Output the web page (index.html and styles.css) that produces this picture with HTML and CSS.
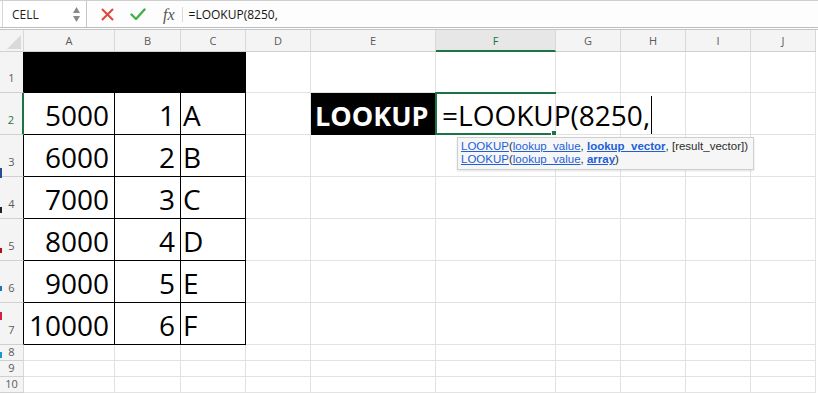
FILE: index.html
```html
<!DOCTYPE html>
<html lang="en">

<head>
  <meta charset="UTF-8">
  <meta name="viewport" content="width=device-width, initial-scale=1.0">
  <title>LOOKUP</title>
  <link rel="stylesheet" href="styles.css">
</head>

<body>
  <div class="toolbar">
    <div class="namebox">
      <span class="name">CELL</span>
      <svg class="spin" width="9" height="18" viewBox="0 0 9 18">
        <path d="M1 8 L4.5 2 L8 8 Z" fill="#8a8a8a" />
        <path d="M1 11 L4.5 17 L8 11 Z" fill="#8a8a8a" />
      </svg>
    </div>
    <div class="actions">
      <svg class="icon-cancel" width="13" height="13" viewBox="0 0 13 13">
        <path d="M1.5 1.5 L11.5 11.5 M11.5 1.5 L1.5 11.5" stroke="#e5433e" stroke-width="2" stroke-linecap="round" />
      </svg>
      <svg class="icon-ok" width="16" height="13" viewBox="0 0 16 13">
        <path d="M1.5 6.5 L6 11 L14.5 1.5" fill="none" stroke="#3fb24a" stroke-width="2.4" stroke-linecap="round" stroke-linejoin="round" />
      </svg>
      <span class="fx">fx</span>
    </div>
    <div class="formula">=LOOKUP(8250,</div>
  </div>

  <div class="sheet">
    <div class="corner"></div>
    <div class="ch">A</div>
    <div class="ch">B</div>
    <div class="ch">C</div>
    <div class="ch">D</div>
    <div class="ch">E</div>
    <div class="ch ch-sel">F</div>
    <div class="ch">G</div>
    <div class="ch">H</div>
    <div class="ch">I</div>
    <div class="ch">J</div>

    <div class="rh rh-edge">1</div>
    <div class="c t blk"></div>
    <div class="c t blk"></div>
    <div class="c t blk"></div>
    <div class="c"></div>
    <div class="c"></div>
    <div class="c"></div>
    <div class="c"></div>
    <div class="c"></div>
    <div class="c"></div>
    <div class="c"></div>

    <div class="rh rh-sel">2</div>
    <div class="c t num">5000</div>
    <div class="c t num">1</div>
    <div class="c t txt">A</div>
    <div class="c"></div>
    <div class="c label">LOOKUP</div>
    <div class="c active"><span class="edit">=LOOKUP(8250,</span></div>
    <div class="c"></div>
    <div class="c"></div>
    <div class="c"></div>
    <div class="c"></div>

    <div class="rh rh-edge">3</div>
    <div class="c t num">6000</div>
    <div class="c t num">2</div>
    <div class="c t txt">B</div>
    <div class="c"></div>
    <div class="c"></div>
    <div class="c"></div>
    <div class="c"></div>
    <div class="c"></div>
    <div class="c"></div>
    <div class="c"></div>

    <div class="rh rh-edge">4</div>
    <div class="c t num">7000</div>
    <div class="c t num">3</div>
    <div class="c t txt">C</div>
    <div class="c"></div>
    <div class="c"></div>
    <div class="c"></div>
    <div class="c"></div>
    <div class="c"></div>
    <div class="c"></div>
    <div class="c"></div>

    <div class="rh rh-edge">5</div>
    <div class="c t num">8000</div>
    <div class="c t num">4</div>
    <div class="c t txt">D</div>
    <div class="c"></div>
    <div class="c"></div>
    <div class="c"></div>
    <div class="c"></div>
    <div class="c"></div>
    <div class="c"></div>
    <div class="c"></div>

    <div class="rh rh-edge">6</div>
    <div class="c t num">9000</div>
    <div class="c t num">5</div>
    <div class="c t txt">E</div>
    <div class="c"></div>
    <div class="c"></div>
    <div class="c"></div>
    <div class="c"></div>
    <div class="c"></div>
    <div class="c"></div>
    <div class="c"></div>

    <div class="rh rh-edge">7</div>
    <div class="c t num">10000</div>
    <div class="c t num">6</div>
    <div class="c t txt">F</div>
    <div class="c"></div>
    <div class="c"></div>
    <div class="c"></div>
    <div class="c"></div>
    <div class="c"></div>
    <div class="c"></div>
    <div class="c"></div>

    <div class="rh rh-small">8</div>
    <div class="c"></div>
    <div class="c"></div>
    <div class="c"></div>
    <div class="c"></div>
    <div class="c"></div>
    <div class="c"></div>
    <div class="c"></div>
    <div class="c"></div>
    <div class="c"></div>
    <div class="c"></div>

    <div class="rh rh-small">9</div>
    <div class="c"></div>
    <div class="c"></div>
    <div class="c"></div>
    <div class="c"></div>
    <div class="c"></div>
    <div class="c"></div>
    <div class="c"></div>
    <div class="c"></div>
    <div class="c"></div>
    <div class="c"></div>

    <div class="rh rh-small">10</div>
    <div class="c"></div>
    <div class="c"></div>
    <div class="c"></div>
    <div class="c"></div>
    <div class="c"></div>
    <div class="c"></div>
    <div class="c"></div>
    <div class="c"></div>
    <div class="c"></div>
    <div class="c"></div>

    <div class="tip">
      <div><a>LOOKUP</a>(<a>lookup_value</a>, <a class="cur">lookup_vector</a>, [result_vector])</div>
      <div><a>LOOKUP</a>(<a>lookup_value</a>, <a class="cur">array</a>)</div>
    </div>
    <div class="edge"></div>
  </div>
</body>

</html>
```

FILE: styles.css
```css
body {
  margin: 0;
  background-color: #fff;
  font-family: "Open Sans", sans-serif;
  overflow: hidden;
}

.toolbar {
  display: flex;
  align-items: center;
  height: 28px;
  box-sizing: border-box;
  border-top: 1px solid #cfcfcf;
  border-bottom: 1px solid #bdbdbd;
  background-color: #fdfdfd;
}

.namebox {
  display: flex;
  align-items: center;
  justify-content: space-between;
  width: 85px;
  height: 100%;
  box-sizing: border-box;
  margin-left: 2px;
  padding: 0 5px 0 9px;
  border-left: 1px solid #d6d6d6;
  border-right: 1px solid #c6c6c6;
  background-color: #fff;
}

.name {
  font-size: 12px;
  color: #1e1e1e;
}

.spin {
  display: block;
}

.actions {
  display: flex;
  align-items: center;
  height: 15px;
  padding: 0 7px 0 13px;
  border-right: 1px solid #dadada;
  margin-left: 1px;
}

.icon-cancel {
  margin-right: 16px;
}

.icon-ok {
  margin-right: 17px;
}

.fx {
  font-family: "Liberation Serif", serif;
  font-style: italic;
  font-size: 16px;
  color: #555;
  line-height: 15px;
}

.formula {
  padding-left: 6px;
  font-size: 12px;
  color: #141414;
}

.sheet {
  position: relative;
  display: grid;
  grid-template-columns: 24px 91px 66px 65px 65px 125px 120px 65px 65px 65px 65px;
  grid-template-rows: 22px 41px repeat(6, 42px) repeat(3, 16px);
  margin-top: 1px;
  border-top: 1px solid #c4c4c4;
}

.corner,
.ch,
.rh {
  box-sizing: border-box;
  background-color: #f4f4f4;
  border-right: 1px solid #d8d8d8;
  border-bottom: 1px solid #d0d0d0;
  font-size: 11px;
  color: #5a5a5a;
}

.corner {
  position: relative;
}

.corner::after {
  content: "";
  position: absolute;
  right: 2px;
  bottom: 2px;
  width: 0;
  height: 0;
  border-left: 14px solid transparent;
  border-bottom: 14px solid #dadada;
}

.ch {
  display: flex;
  align-items: center;
  justify-content: center;
}

.ch-sel {
  background-color: #e7e7e7;
  border-bottom: 2px solid #1c7444;
  color: #1c7444;
}

.rh {
  display: flex;
  align-items: flex-end;
  justify-content: center;
  padding-bottom: 6px;
  line-height: 16px;
}

.rh-edge {
  border-right-color: #000;
}

.rh-sel {
  border-right: 2px solid #1c7444;
  color: #1c7444;
}

.rh-small {
  padding-bottom: 0;
}

.c {
  display: flex;
  align-items: flex-end;
  box-sizing: border-box;
  border-right: 1px solid #e2e2e2;
  border-bottom: 1px solid #e2e2e2;
  font-size: 28px;
  color: #000;
  white-space: nowrap;
}

.t {
  border-right-color: #000;
  border-bottom-color: #000;
}

.blk {
  background-color: #000;
}

.num {
  justify-content: flex-end;
  padding-right: 5px;
}

.txt {
  padding-left: 2px;
}

.label {
  background-color: #000;
  border-right-color: #000;
  border-bottom-color: #000;
  color: #fff;
  font-weight: 700;
  font-size: 27px;
  padding-left: 4px;
}

.active {
  position: relative;
  padding-left: 6px;
  overflow: visible;
}

.active::before {
  content: "";
  position: absolute;
  top: -1px;
  left: -1px;
  right: -1px;
  bottom: -1px;
  border: 2px solid #1c7444;
  border-right: none;
}

.active::after {
  content: "";
  position: absolute;
  right: -2px;
  bottom: -2px;
  width: 4px;
  height: 4px;
  background-color: #1c7444;
  border: 1px solid #fff;
}

.edit {
  position: relative;
  z-index: 1;
  padding-right: 1px;
  border-right: 1px solid #000;
}

.tip {
  position: absolute;
  top: 107px;
  left: 457px;
  width: 297px;
  height: 33px;
  box-sizing: border-box;
  padding: 2px 0 0 3px;
  background-color: #f6f6f6;
  border: 1px solid #cfcfcf;
  box-shadow: 0 1px 2px rgba(0, 0, 0, 0.12);
  font-family: "Liberation Sans", Arial, sans-serif;
  font-size: 11.5px;
  line-height: 13px;
  color: #2b2b2b;
  white-space: nowrap;
  z-index: 2;
}

.tip a {
  color: #1f5fd8;
  text-decoration: underline;
}

.tip .cur {
  font-weight: 700;
}

.edge {
  position: absolute;
  top: 130px;
  left: 0;
  width: 2px;
  height: 200px;
  background: linear-gradient(to bottom,
      transparent 0, transparent 8px, #2b4a9a 8px, #2b4a9a 18px,
      transparent 18px, transparent 47px, #222 47px, #222 53px,
      transparent 53px, transparent 88px, #b0101a 88px, #b0101a 93px,
      transparent 93px, transparent 126px, #1478b8 126px, #1478b8 131px,
      transparent 131px, transparent 152px, #d0204a 152px, #d0204a 160px,
      transparent 160px, transparent 192px, #1898d0 192px, #1898d0 198px,
      transparent 198px);
}
```
